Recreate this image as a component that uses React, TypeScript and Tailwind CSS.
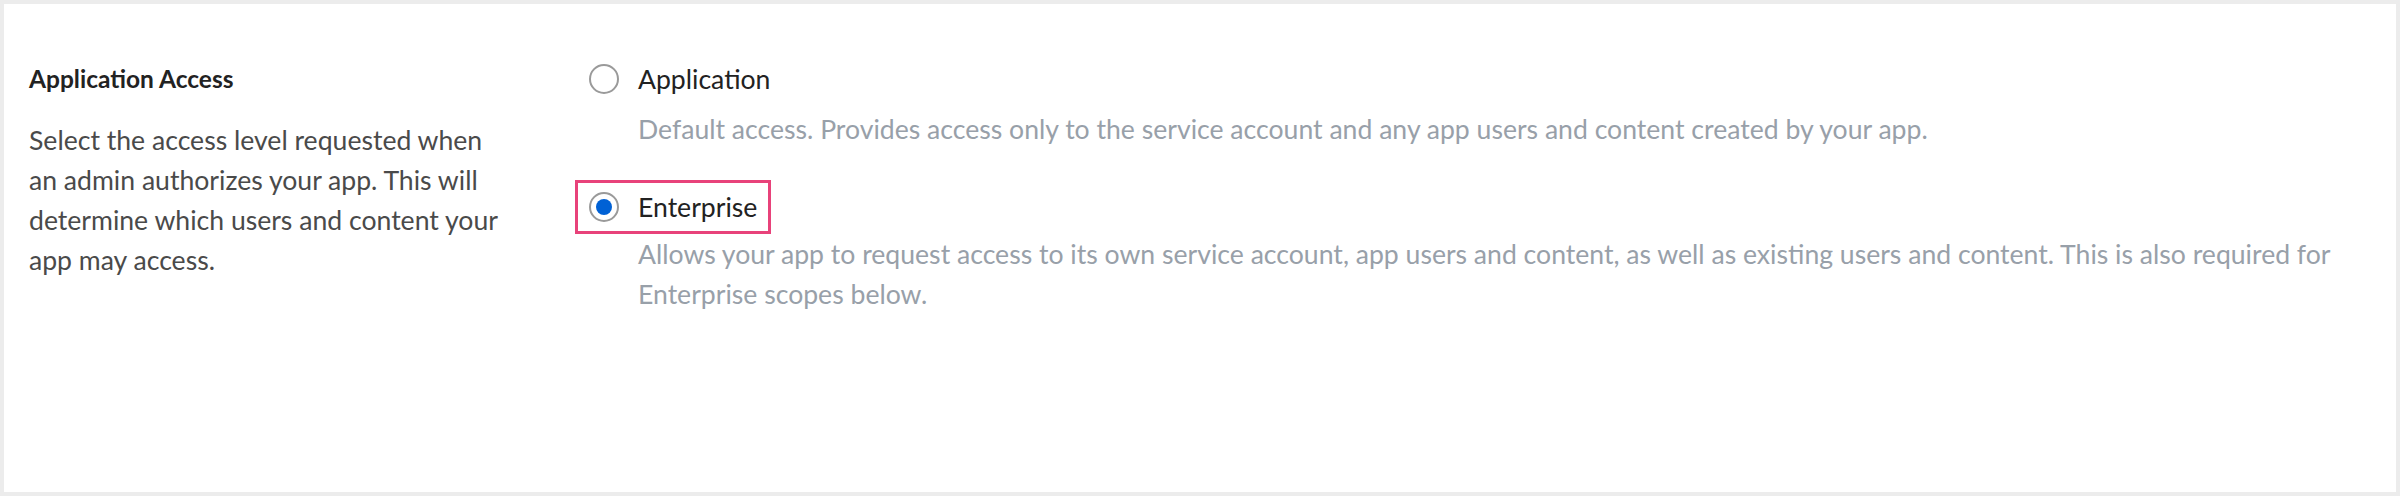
import React from "react";

const FONT = { fontFamily: "Lato, 'Open Sans', 'Liberation Sans', sans-serif" };

function Radio({ checked }: { checked?: boolean }) {
  return (
    <span className="flex h-[30px] w-[30px] shrink-0 items-center justify-center rounded-full border-2 border-[#9a9a9a] bg-white">
      {checked && <span className="h-[16px] w-[16px] rounded-full bg-[#0061d5]" />}
    </span>
  );
}

export default function App() {
  return (
    <div className="h-[496px] w-full bg-[#ececec] p-1" style={FONT}>
      <div className="flex h-full w-full bg-white pl-[25px] pt-[55px]">
        {/* Section description */}
        <div className="w-[560px] shrink-0 pr-[72px]">
          <h2 className="text-[24.5px] font-bold leading-[40px] text-[#222222]">Application Access</h2>
          <p className="mt-[21px] text-[26.6px] leading-[40px] text-[#4a4a4a]">
            Select the access level requested when an admin authorizes your app. This will determine which users and
            content your app may access.
          </p>
        </div>

        {/* Options */}
        <div className="flex flex-col">
          <label className="flex h-[40px] items-center gap-[19px]">
            <Radio />
            <span className="text-[26.6px] leading-[40px] text-[#222222]">Application</span>
          </label>
          <p className="mt-[10px] pl-[49px] text-[26.6px] leading-[40px] text-[#98a0a9]">
            Default access. Provides access only to the service account and any app users and content created by your
            app.
          </p>

          <div className="-ml-[14px] mt-[31px] w-fit border-[3px] border-[#e8427a] px-[11px] py-[4px]">
            <label className="flex h-[40px] items-center gap-[19px]">
              <Radio checked />
              <span className="text-[26.6px] leading-[40px] text-[#222222]">Enterprise</span>
            </label>
          </div>
          <p className="max-w-[1760px] pl-[49px] text-[26.6px] leading-[40px] text-[#98a0a9]">
            Allows your app to request access to its own service account, app users and content, as well as existing
            users and content. This is also required for Enterprise scopes below.
          </p>
        </div>
      </div>
    </div>
  );
}
